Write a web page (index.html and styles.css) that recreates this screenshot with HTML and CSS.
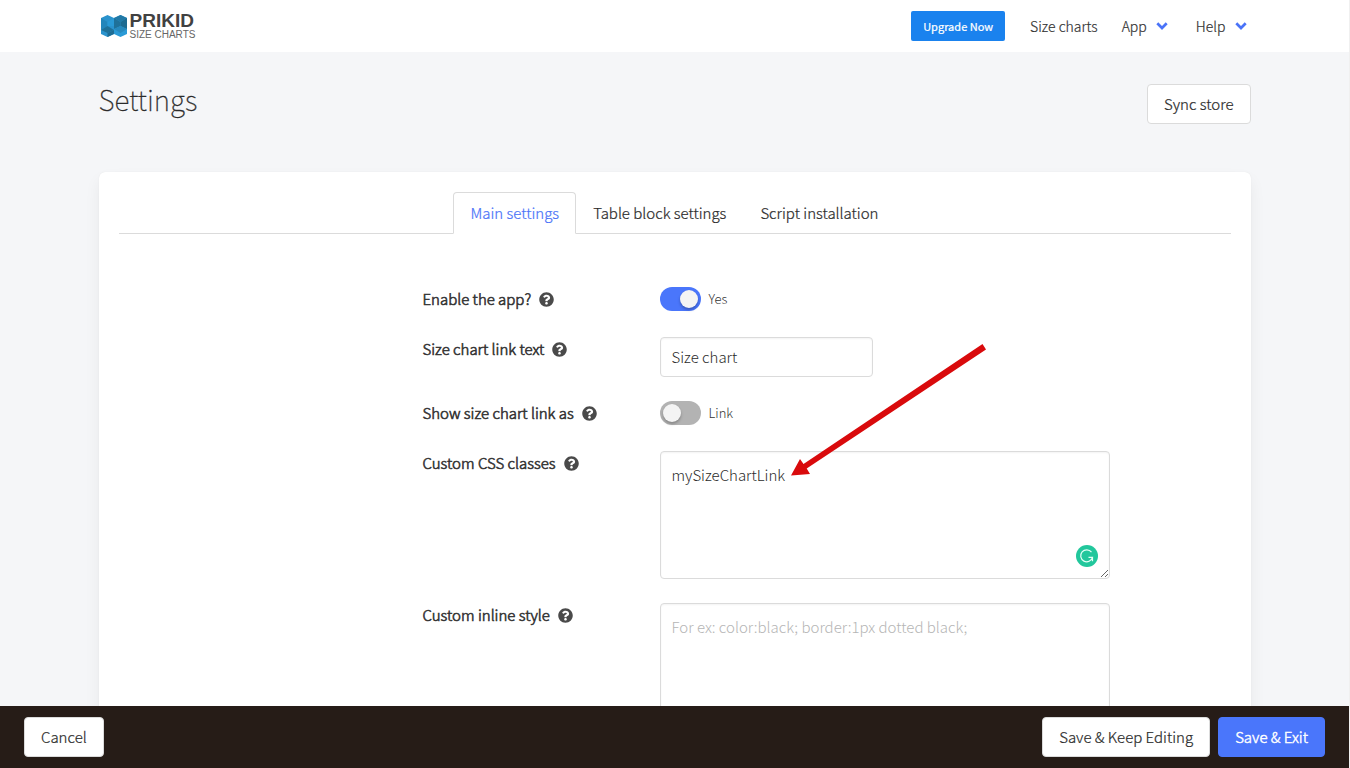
FILE: index.html
```html
<!DOCTYPE html>
<html lang="en">
<head>
<meta charset="utf-8">
<title>Settings - Prikid Size Charts</title>
<meta name="viewport" content="width=device-width, initial-scale=1">
<link rel="stylesheet" href="styles.css">
</head>
<body>
<svg class="sprite" aria-hidden="true">
  <symbol id="help" viewBox="0 0 512 512"><path fill="currentColor" d="M504 256c0 137-111 248-248 248S8 393 8 256 119 8 256 8s248 111 248 248zM262.700 90c-54.500 0-89.300 23-116.500 63.800-3.500 5.300-2.400 12.400 2.700 16.300l34.700 26.300c5.200 3.900 12.600 3 16.700-2.100 17.900-22.700 30.100-35.800 57.300-35.800 20.400 0 45.700 13.100 45.700 33 0 15-12.400 22.700-32.500 34C247.100 238.500 216 254.900 216 296v4c0 6.600 5.400 12 12 12h56c6.600 0 12-5.400 12-12v-1.300c0-28.500 83.200-29.600 83.200-106.700 0-58-60.200-102-116.500-102zM256 338c-25.400 0-46 20.600-46 46s20.600 46 46 46 46-20.600 46-46-20.600-46-46-46z"/></symbol>
  <symbol id="chevron" viewBox="0 0 12 8"><path d="M1.300 1.300 6 6l4.700-4.700" fill="none" stroke="currentColor" stroke-width="2.700"/></symbol>
</svg>
<header class="navbar">
  <div class="container navbar-inner">
    <a class="brand" href="#" aria-label="Prikid Size Charts">
      <svg class="brand-mark" viewBox="0 0 26 24" aria-hidden="true">
        <path d="M0 4 6.500 1 13 4v16l-6.500 3L0 20z" fill="#2a93cd"/>
        <path d="M13 4l6.500-3L26 4v16l-6.500 3L13 20z" fill="#2a9ad6"/>
        <path d="M0 4l6.500 4v4L0 16z" fill="#2386bb"/>
        <path d="M6.500 8 13 4v8l-6.500 0z" fill="#2a9ad6"/>
        <path d="M0 16l6.500-4 6.500 4-6.500 3z" fill="#1f7199"/>
        <path d="M6.500 19 13 16v4l-6.500 3z" fill="#1d6c94"/>
        <path d="M13 4l6.500-3L26 4l-6.500 4z" fill="#2279a6"/>
        <path d="M13 4l6.500 4v4L13 15z" fill="#1f7199"/>
        <path d="M19.500 8 26 4v11l-6.500-3z" fill="#1c6a91"/>
        <path d="M13 15l6.500-3 6.500 3-6.500 4z" fill="#2789bd"/>
      </svg>
      <span class="brand-text"><strong>PRIKID</strong><span>SIZE CHARTS</span></span>
    </a>
    <nav class="menu">
      <a class="upgrade" href="#">Upgrade Now</a>
      <a class="menu-item" href="#">Size charts</a>
      <a class="menu-item has-arrow" href="#">App <svg class="chevron" aria-hidden="true"><use href="#chevron"/></svg></a>
      <a class="menu-item has-arrow" href="#">Help <svg class="chevron" aria-hidden="true"><use href="#chevron"/></svg></a>
    </nav>
  </div>
</header>

<main class="page">
  <div class="container">
    <div class="page-head">
      <h1>Settings</h1>
      <button class="button" type="button">Sync store</button>
    </div>
    <section class="card">
      <nav class="tabs">
        <a class="tab active" href="#">Main settings</a>
        <a class="tab" href="#">Table block settings</a>
        <a class="tab" href="#">Script installation</a>
      </nav>
      <form class="form" id="settings">
        <div class="row">
          <div class="label"><label for="enable">Enable the app?</label><svg class="help" aria-hidden="true"><use href="#help"/></svg></div>
          <div class="toggle"><input class="switch" type="checkbox" id="enable" checked><span>Yes</span></div>
        </div>
        <div class="row">
          <div class="label"><label for="text">Size chart link text</label><svg class="help" aria-hidden="true"><use href="#help"/></svg></div>
          <input class="input" type="text" id="text" value="Size chart">
        </div>
        <div class="row">
          <div class="label"><label for="as">Show size chart link as</label><svg class="help" aria-hidden="true"><use href="#help"/></svg></div>
          <div class="toggle"><input class="switch" type="checkbox" id="as"><span>Link</span></div>
        </div>
        <div class="row">
          <div class="label"><label for="classes">Custom CSS classes</label><svg class="help" aria-hidden="true"><use href="#help"/></svg></div>
          <div class="area">
            <textarea class="input textarea" id="classes" spellcheck="false">mySizeChartLink</textarea>
            <svg class="checker" viewBox="0 0 22 22" aria-hidden="true"><circle cx="11" cy="11" r="11" fill="#22c79c"/><path d="M15.500 7.200A6 6 0 1 0 16.500 12.300H12.500M16.500 12v4.200" fill="none" stroke="#e4fff6" stroke-width="1.200"/></svg>
            <svg class="arrow" viewBox="0 0 196 132" aria-hidden="true"><path d="M191.500 0l3.500 5.400L15.700 124.600 19 130 0 131.500 9 115l3.500 5z" fill="#d90a0c"/></svg>
          </div>
        </div>
        <div class="row">
          <div class="label"><label for="style">Custom inline style</label><svg class="help" aria-hidden="true"><use href="#help"/></svg></div>
          <div class="area"><textarea class="input textarea" id="style" placeholder="For ex: color:black; border:1px dotted black;"></textarea></div>
        </div>
      </form>
    </section>
  </div>
</main>

<footer class="actions">
  <button class="button" type="button">Cancel</button>
  <div class="actions-end">
    <button class="button" type="submit" form="settings">Save &amp; Keep Editing</button>
    <button class="button primary" type="submit" form="settings">Save &amp; Exit</button>
  </div>
</footer>
</body>
</html>
```

FILE: styles.css
```css
* { box-sizing: border-box; }

body {
  margin: 0;
  height: 100vh;
  display: flex;
  flex-direction: column;
  border-right: 1px solid #f0f0f0;
  background: #f5f6f8;
  color: #2b2b2b;
  font: 300 15px/24px "Noto Sans CJK SC", "Source Sans Pro", sans-serif;
}

a { color: inherit; text-decoration: none; }
button, input, textarea { font: inherit; color: inherit; }

.sprite { display: none; }

.container {
  width: 100%;
  max-width: 1152px;
  margin: 0 auto;
}

.navbar { flex: none; background: #fff; }
.navbar-inner {
  display: flex;
  justify-content: space-between;
  align-items: center;
  height: 52px;
}

.brand { display: flex; align-items: center; gap: 3px; padding-left: 2px; }
.brand-mark { width: 26px; height: 24px; }
.brand-text {
  display: flex;
  flex-direction: column;
  font: 10px/11px "Liberation Sans", Arial, sans-serif;
  color: #666;
}
.brand-text strong { font-size: 19px; line-height: 17px; color: #414141; }

.menu { display: flex; align-items: center; font-size: 14px; color: #333; }
.menu, .tab, .button { -webkit-text-stroke: .015em currentColor; }
.upgrade {
  height: 30px;
  padding: 0 12px;
  margin-right: 13px;
  border-radius: 2px;
  background: #1a82ee;
  color: #fff;
  font-size: 11px;
  font-weight: 400;
  line-height: 30px;
  -webkit-text-stroke: .02em currentColor;
}
.menu-item { padding: 0 12px; }
.has-arrow { display: flex; align-items: center; gap: 9px; padding-right: 16px; }
.has-arrow:last-child { padding-right: 4px; }
.chevron { width: 12px; height: 8px; color: #4a73f8; }

.page { flex: 1; min-height: 0; overflow: auto; scrollbar-width: none; }

.page-head {
  display: flex;
  justify-content: space-between;
  align-items: flex-start;
  padding: 32px 0 48px;
}
h1 { margin: 0; font-size: 28px; line-height: 30px; font-weight: 100; -webkit-text-stroke: .01em currentColor; }

.button {
  height: 40px;
  padding: 0 16px;
  border: 1px solid #dbdbdb;
  border-radius: 4px;
  background: #fff;
  cursor: pointer;
}
.primary { border-color: #4a76fb; background: #4a76fb; color: #fff; -webkit-text-stroke-width: .03em; }

.card {
  padding: 20px 20px 48px;
  border-radius: 6px;
  background: #fff;
  box-shadow: 0 8px 16px rgba(10, 10, 10, .06), 0 0 1px rgba(10, 10, 10, .1);
}

.tabs { display: flex; justify-content: center; border-bottom: 1px solid #dbdbdb; }
.tab {
  padding: 8px 16px;
  margin-bottom: -1px;
  border: 1px solid transparent;
  border-radius: 4px 4px 0 0;
}
.active { border-color: #dbdbdb; border-bottom-color: #fff; background: #fff; color: #4a73f8; }

.form {
  display: grid;
  gap: 24px;
  max-width: 991px;
  padding: 53px 0 0 304px;
}
.row { display: grid; grid-template-columns: 213px 1fr; gap: 24px; align-items: start; }
.label { display: flex; align-items: center; gap: 8px; color: #333; -webkit-text-stroke: .04em currentColor; }
.help { width: 15px; height: 15px; color: #4a4a4a; }

.toggle { display: flex; align-items: flex-start; gap: 8px; min-height: 26px; font-size: 13px; color: #333; }
.switch {
  appearance: none;
  display: flex;
  width: 41px;
  height: 24px;
  margin: 0;
  padding: 3px;
  border-radius: 12px;
  background: #b3b3b3;
}
.switch::before {
  content: "";
  width: 18px;
  height: 18px;
  border-radius: 50%;
  background: #f4f4f4;
  box-shadow: 0 2px 3px rgba(0, 0, 0, .25);
}
.switch:checked { justify-content: flex-end; background: #4a76fb; }

.input {
  display: block;
  width: 213px;
  height: 40px;
  padding: 6px 11px 8px;
  border: 1px solid #dbdbdb;
  border-radius: 4px;
  background: #fff;
  box-shadow: inset 0 1px 2px rgba(10, 10, 10, .05);
}
.area { position: relative; }
.textarea { width: 100%; height: 128px; padding: 11px; resize: vertical; }
.textarea::placeholder { color: #b5b5b5; }

.checker { position: absolute; right: 12px; bottom: 12px; width: 22px; height: 22px; }
.arrow { position: absolute; left: 131px; top: -107px; width: 196px; height: 132px; pointer-events: none; }

.actions {
  flex: none;
  display: flex;
  justify-content: space-between;
  padding: 11px 24px;
  background: #261c17;
}
.actions-end { display: flex; gap: 8px; }
```
